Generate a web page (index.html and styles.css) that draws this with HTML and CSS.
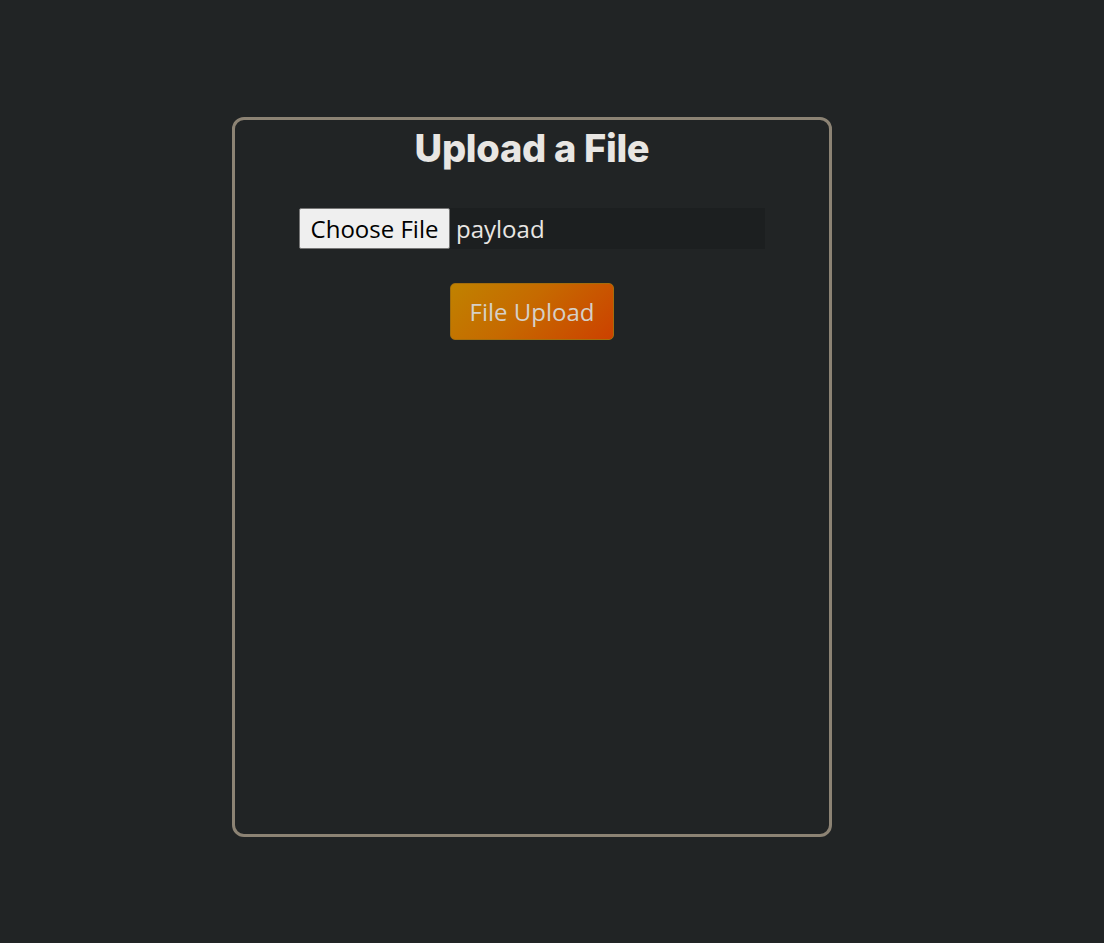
FILE: index.html
```html
<!DOCTYPE html>
<html>
<head>
<meta charset="utf-8">
<link rel="stylesheet" href="styles.css">
</head>
<body>
<div class="page">
  <div class="card">
    <h1 class="title">Upload a File</h1>
    <form class="form">
      <div class="file-input">
        <span class="choose">Choose File</span>
        <span class="filename">payload</span>
      </div>
      <button type="button" class="upload">File Upload</button>
    </form>
  </div>
</div>
</body>
</html>
```
FILE: styles.css
```css
html, body {
  margin: 0;
  padding: 0;
  background: #212425;
  height: 100%;
}
.page {
  padding-top: 117px;
  padding-left: 232px;
}
.card {
  box-sizing: border-box;
  width: 600px;
  height: 720px;
  border: 3px solid #8c8374;
  border-radius: 12px;
  display: flex;
  flex-direction: column;
  align-items: center;
}
.title {
  margin: 5px 0 0 0;
  font-family: Inter, "Open Sans", sans-serif;
  font-weight: 800;
  font-size: 38px;
  letter-spacing: -0.3px;
  line-height: 46px;
  color: #e8e6e3;
}
.form {
  display: flex;
  flex-direction: column;
  align-items: center;
  margin-top: 37px;
}
.file-input {
  display: flex;
  align-items: center;
  width: 466px;
  height: 41px;
  background: #1c1f20;
  font-family: "Open Sans", "Noto Sans", sans-serif;
  font-size: 24px;
}
.choose {
  box-sizing: border-box;
  width: 151px;
  height: 41px;
  display: flex;
  align-items: center;
  justify-content: center;
  background: #efefef;
  border: 1px solid #767676;
  border-radius: 2px;
  color: #000;
}
.filename {
  margin-left: 6px;
  color: #e8e6e3;
}
.upload {
  margin-top: 34px;
  width: 164px;
  height: 57px;
  border: 1px solid #a46d0c;
  border-radius: 5px;
  background: linear-gradient(135deg, #c08200 0%, #c66a00 45%, #cc4100 100%);
  color: #d6d0c8;
  font-family: "Open Sans", "Noto Sans", sans-serif;
  font-size: 24px;
  padding: 0 0 1px 0;
  cursor: pointer;
}
```
